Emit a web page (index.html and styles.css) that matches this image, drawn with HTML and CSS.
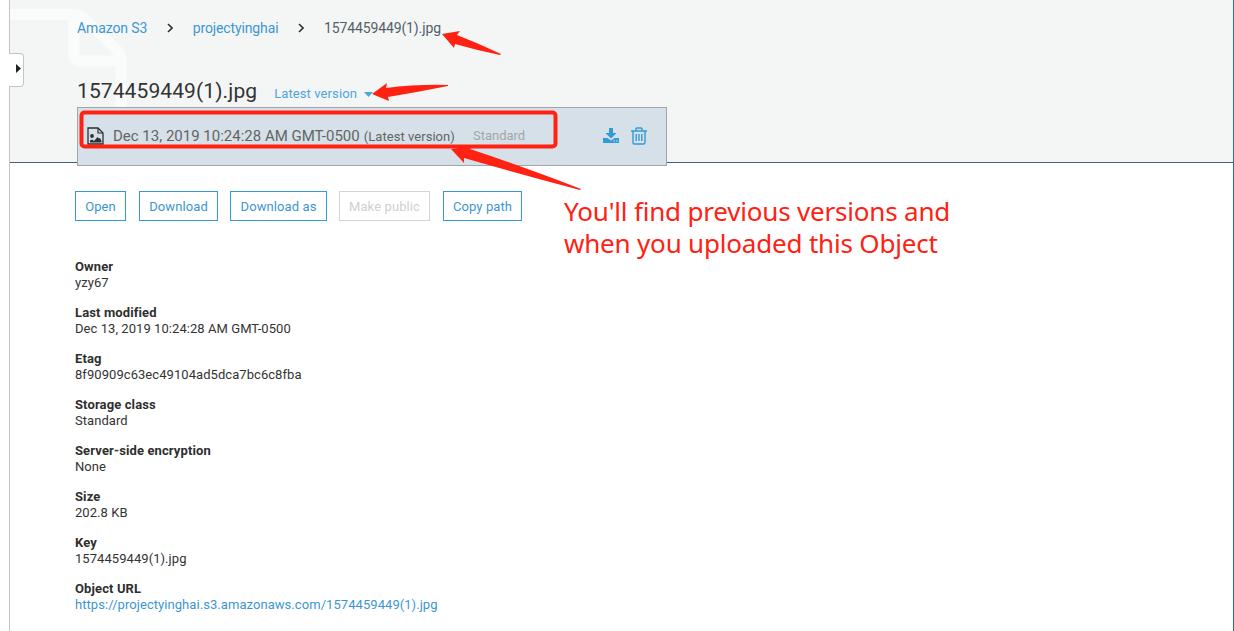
FILE: index.html
```
<!DOCTYPE html>
<html lang="en">
<head>
<meta charset="utf-8">
<title>Amazon S3 - 1574459449(1).jpg</title>
<link rel="stylesheet" href="styles.css">
</head>
<body>
<div class="page">
  <header class="header">
    <svg class="watermark" width="120" height="162" viewBox="0 0 120 162"><path d="M0 14.500H62Q70 14.500 77 21L106 49Q111 54 111 60V162M64 15V54Q64 61 71 61H111" fill="none" stroke="#fafcfb" stroke-width="11"/></svg>
    <nav class="crumbs">
      <a class="link crumb-root">Amazon S3</a>
      <svg class="chevron" width="6" height="10" viewBox="0 0 6 10"><path d="M1 1L5 5L1 9"/></svg>
      <a class="link crumb-bucket">projectyinghai</a>
      <svg class="chevron" width="6" height="10" viewBox="0 0 6 10"><path d="M1 1L5 5L1 9"/></svg>
      <span class="crumb-object">1574459449(1).jpg</span>
    </nav>
    <div class="title-row">
      <h1 class="title">1574459449(1).jpg</h1>
      <a class="version-link">Latest version</a>
      <svg class="caret" width="9" height="5" viewBox="0 0 9 5"><path d="M0 0H9L4.500 5Z"/></svg>
    </div>
    <div class="version-menu">
      <svg class="file-icon" width="17" height="18" viewBox="0 0 17 18"><path d="M1 1H11L16 6V17H1Z" fill="none" stroke="#2b3035" stroke-width="1.300"/><path d="M11 1V6H16" fill="none" stroke="#2b3035" stroke-width="1.200"/><circle cx="5" cy="9" r="1.900" fill="#2b3035"/><path d="M3 15.500V13.500L5 12.500L7 14L10.500 10L12 11.500L13 11L14.500 14V15.500Z" fill="#2b3035"/></svg>
      <span class="version-date">Dec 13, 2019 10:24:28 AM GMT-0500</span>
      <span class="version-note">(Latest version)</span>
      <span class="version-class">Standard</span>
      <span class="version-actions">
        <svg width="16" height="16" viewBox="0 0 16 16" fill="#329ad6"><path d="M6 0H10V5H13.500L8 10.500L2.500 5H6Z"/><path fill-rule="evenodd" d="M0 10H4.500L8 12.500L11.500 10H16V15H0ZM10.500 12.500V13.500H12V12.500ZM13 12.500V13.500H14.500V12.500Z"/></svg>
        <svg width="16" height="18" viewBox="0 0 16 18" fill="none" stroke="#329ad6" stroke-width="1.400"><path d="M0 4H16M5 4V2Q5 1 6 1H10Q11 1 11 2V4M2 4V15.500Q2 17 3.500 17H12.500Q14 17 14 15.500V4M5.200 7V14M8 7V14M10.800 7V14"/></svg>
      </span>
    </div>
  </header>
  <main class="content">
    <div class="buttons">
      <button class="btn btn-open">Open</button>
      <button class="btn btn-download">Download</button>
      <button class="btn btn-download-as">Download as</button>
      <button class="btn btn-public" disabled>Make public</button>
      <button class="btn btn-copy">Copy path</button>
    </div>
    <dl class="details">
      <div class="detail"><dt>Owner</dt><dd>yzy67</dd></div>
      <div class="detail"><dt>Last modified</dt><dd>Dec 13, 2019 10:24:28 AM GMT-0500</dd></div>
      <div class="detail"><dt>Etag</dt><dd>8f90909c63ec49104ad5dca7bc6c8fba</dd></div>
      <div class="detail"><dt>Storage class</dt><dd>Standard</dd></div>
      <div class="detail"><dt>Server-side encryption</dt><dd>None</dd></div>
      <div class="detail"><dt>Size</dt><dd>202.8 KB</dd></div>
      <div class="detail"><dt>Key</dt><dd>1574459449(1).jpg</dd></div>
      <div class="detail"><dt>Object URL</dt><dd><a class="link">https://projectyinghai.s3.amazonaws.com/1574459449(1).jpg</a></dd></div>
    </dl>
  </main>
</div>
<div class="drawer-tab"><svg width="5" height="9" viewBox="0 0 5 9"><path d="M0 0L5 4.500L0 9Z" fill="#222"/></svg></div>
<svg class="marks" width="1234" height="631" viewBox="0 0 1234 631" fill="#ff2112">
  <rect x="81.500" y="112.500" width="474" height="34" rx="3" fill="none" stroke="#ff2112" stroke-width="4"/>
  <path d="M442 34L460 31L457 35Q480 44 501 54L500 55Q476 50 455 44L454 48Z"/>
  <path d="M372 94L387 83L386 88Q418 84 448 85V86Q418 92 388 97L389 101Z"/>
  <path d="M451 149L475 146L470 149Q530 169 581 189L580 190Q520 174 464 158L464 163Z"/>
</svg>
<p class="annotation">You'll find previous versions and<br>when you uploaded this Object</p>
</body>
</html>
```
FILE: styles.css
```
* { box-sizing: border-box; }
body { margin: 0; width: 1234px; height: 631px; overflow: hidden; position: relative; background: #fff; color: #333; font: 13px/16px Roboto, sans-serif; }
.page { height: 631px; margin-left: 9px; border-left: 1px solid #c4c4c4; border-right: 1px solid #1e73b4; }
.header { position: relative; height: 163px; background: #f4f6f6; border-bottom: 1px solid #44626f; padding: 20px 0 0 67px; }
.watermark { position: absolute; left: 0; top: 0; }
.crumbs { position: relative; display: flex; align-items: center; height: 16px; font-size: 14px; letter-spacing: -.12px; }
.link { color: #3d96d2; }
.chevron { margin: 0 20px 0 19.5px; fill: none; stroke: #333; stroke-width: 1.6; }
.crumb-object { color: #555f69; }
.title-row { position: relative; display: flex; align-items: center; height: 28px; margin-top: 41px; }
.title { margin: 0; font-size: 21px; font-weight: 400; line-height: 28px; letter-spacing: .1px; color: #333; }
.version-link { margin: 5px 0 0 17px; color: #4ca5dc; letter-spacing: .1px; }
.caret { margin: 6px 0 0 7px; fill: #4ca5dc; }
.version-menu { position: relative; display: flex; align-items: center; width: 590px; height: 59px; margin-top: 2px; padding: 0 19px 2px 9px; background: #d6e0e8; border: 1px solid #a0a6ac; color: #646464; }
.version-date { margin-left: 9px; font-size: 15px; }
.version-note { margin: 2px 0 0 4px; letter-spacing: .05px; }
.version-class { margin-left: 18px; color: #a2a7aa; }
.version-actions { display: flex; align-items: center; gap: 12px; margin-left: auto; }
.content { padding: 28px 0 0 65px; }
.buttons { display: flex; }
.btn { height: 30px; margin: 0 12px 0 0; padding: 2px 0 0; border: 1px solid #329ad6; background: #fff; color: #3d96d2; font: 13px/16px Roboto, sans-serif; letter-spacing: .1px; }
.btn:disabled { border-color: #d5d5d5; color: #d0d0d0; }
.btn-open { width: 51px; margin-right: 13px; }
.btn-download { width: 79px; }
.btn-download-as { width: 97px; }
.btn-public { width: 91px; margin-right: 13px; }
.btn-copy { width: 79px; }
.details { margin: 38px 0 0; display: grid; gap: 14px; }
.detail { height: 32px; }
dt { font-weight: 700; color: #2f2f2f; letter-spacing: .12px; }
dd { margin: 0; letter-spacing: .06px; }
.drawer-tab { position: absolute; left: 9px; top: 53px; width: 15px; height: 34px; padding: 0 2px 3px 0; display: flex; align-items: center; justify-content: flex-end; background: #fff; border: 1px solid #c4c4c4; border-left: 0; border-radius: 0 4px 4px 0; }
.marks { position: absolute; left: 0; top: 0; }
.annotation { position: absolute; left: 564px; top: 195px; margin: 0; font: 26px/32px "Noto Sans", sans-serif; letter-spacing: -.19px; color: #ff2112; white-space: nowrap; }
```
